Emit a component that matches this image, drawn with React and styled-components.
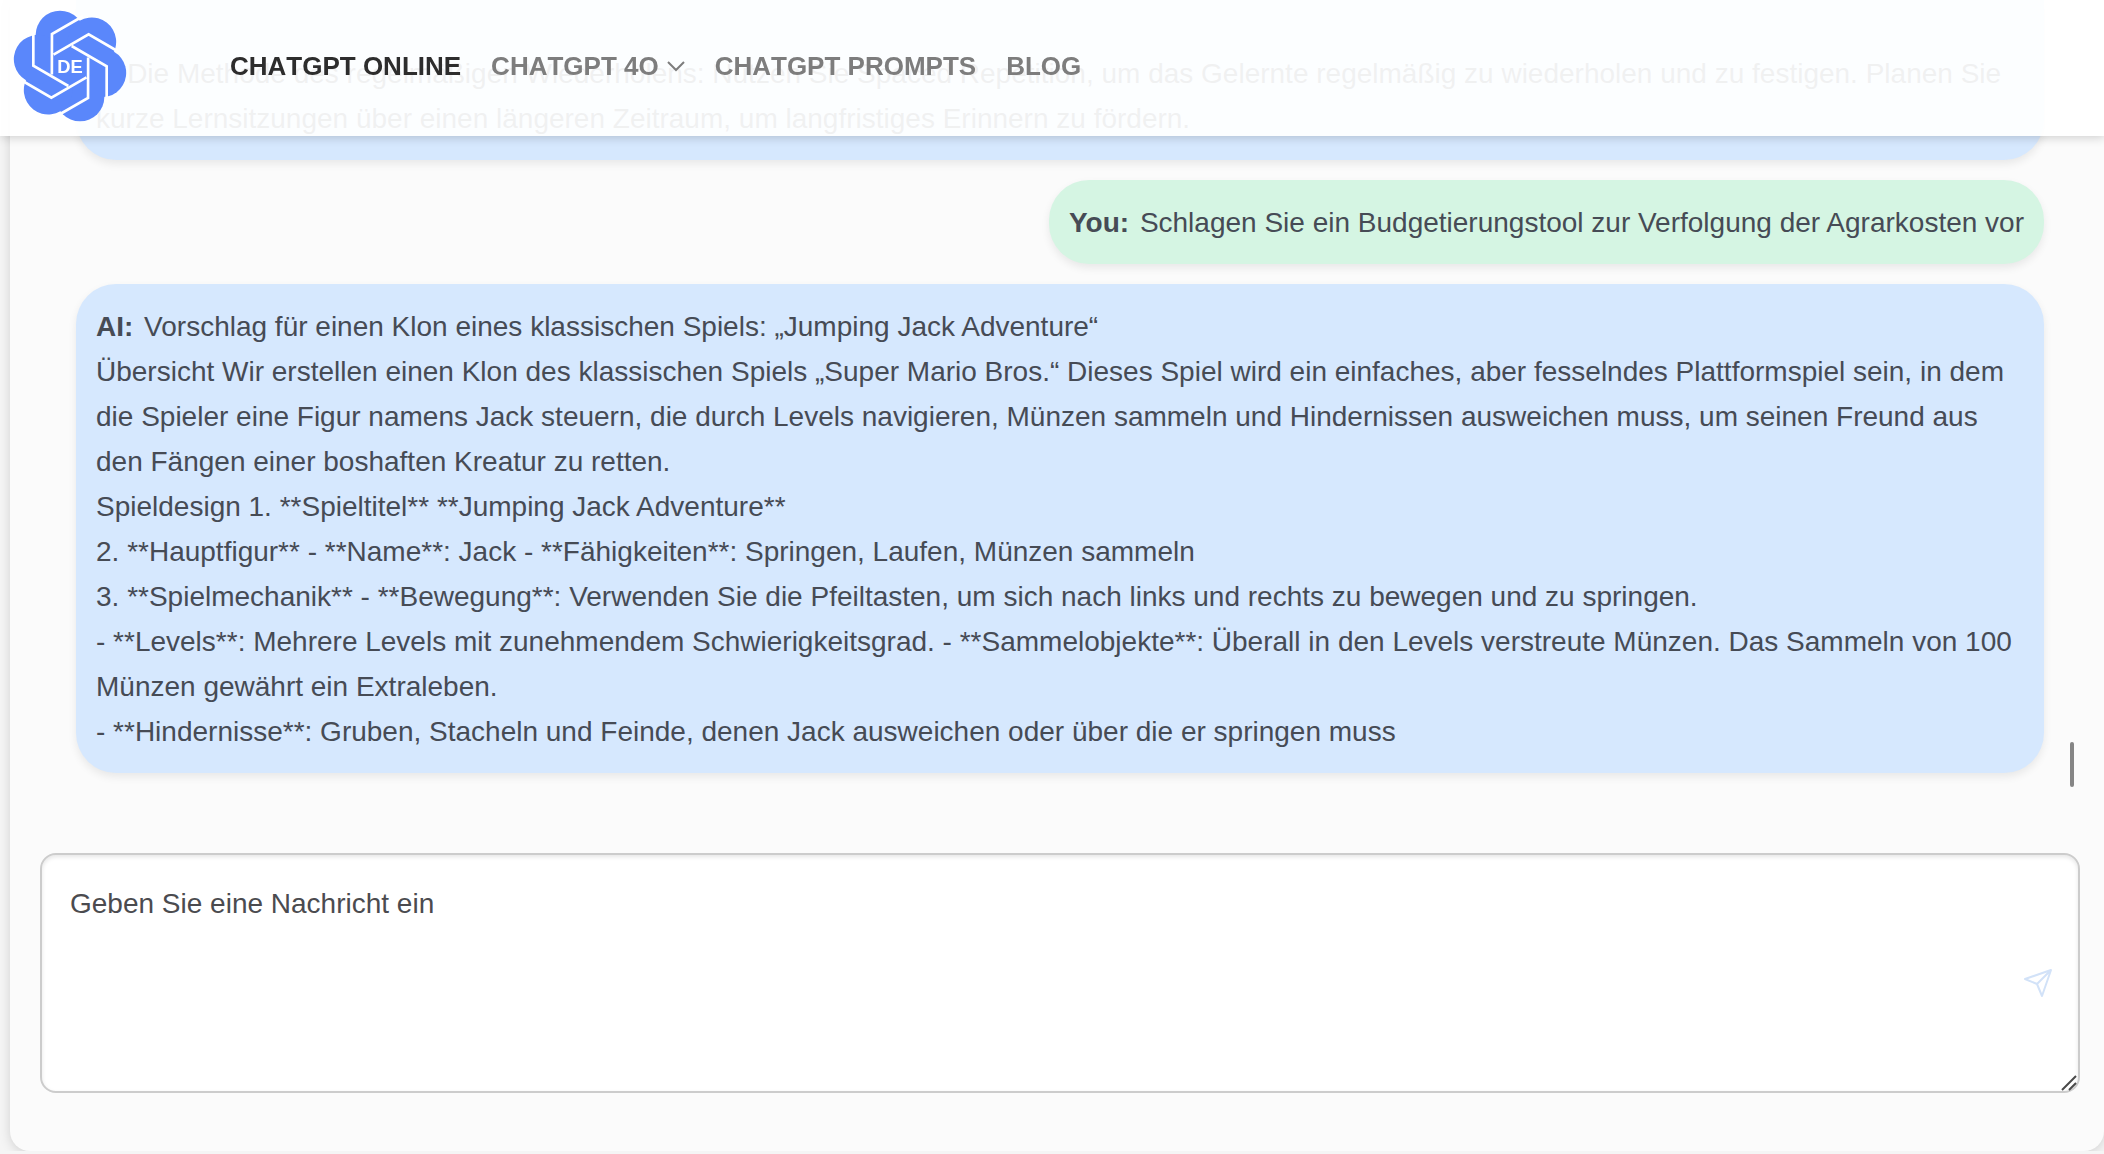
import { useState } from "react";
import styled, { createGlobalStyle } from "styled-components";

const messages = [
  {
    id: 1,
    author: null,
    continued: true,
    lines: [
      "5. Die Methode des regelmäßigen Wiederholens: Nutzen Sie Spaced Repetition, um das Gelernte regelmäßig zu wiederholen und zu festigen. Planen Sie kurze Lernsitzungen über einen längeren Zeitraum, um langfristiges Erinnern zu fördern.",
    ],
  },
  {
    id: 2,
    author: "You:",
    mine: true,
    lines: ["Schlagen Sie ein Budgetierungstool zur Verfolgung der Agrarkosten vor"],
  },
  {
    id: 3,
    author: "AI:",
    lines: [
      "Vorschlag für einen Klon eines klassischen Spiels: „Jumping Jack Adventure“",
      "Übersicht Wir erstellen einen Klon des klassischen Spiels „Super Mario Bros.“ Dieses Spiel wird ein einfaches, aber fesselndes Plattformspiel sein, in dem die Spieler eine Figur namens Jack steuern, die durch Levels navigieren, Münzen sammeln und Hindernissen ausweichen muss, um seinen Freund aus den Fängen einer boshaften Kreatur zu retten.",
      "Spieldesign 1. **Spieltitel** **Jumping Jack Adventure**",
      "2. **Hauptfigur** - **Name**: Jack - **Fähigkeiten**: Springen, Laufen, Münzen sammeln",
      "3. **Spielmechanik** - **Bewegung**: Verwenden Sie die Pfeiltasten, um sich nach links und rechts zu bewegen und zu springen.",
      "- **Levels**: Mehrere Levels mit zunehmendem Schwierigkeitsgrad. - **Sammelobjekte**: Überall in den Levels verstreute Münzen. Das Sammeln von 100 Münzen gewährt ein Extraleben.",
      "- **Hindernisse**: Gruben, Stacheln und Feinde, denen Jack ausweichen oder über die er springen muss",
    ],
  },
];

const angles = [0, 60, 120, 180, 240, 300];

function Logo() {
  return (
    <svg width="114" height="114" viewBox="-171 -171 342 342" aria-hidden="true">
      <g fill="#5a87fb">
        <circle r="118" />
        {angles.map((angle) => (
          <circle
            key={angle}
            cx="-30"
            cy="-93"
            r="73"
            transform={`rotate(${angle})`}
          />
        ))}
      </g>
      <g fill="none" stroke="#fff" strokeWidth="8">
        {angles.map((angle) => (
          <path
            key={angle}
            d="M-110 -108V-1L-5 60"
            transform={`rotate(${angle})`}
          />
        ))}
      </g>
      <text
        x="0"
        y="22"
        textAnchor="middle"
        fill="#fff"
        fontFamily="Liberation Sans, Arial, sans-serif"
        fontSize="55"
        fontWeight="bold"
      >
        DE
      </text>
    </svg>
  );
}

function App() {
  const [message, setMessage] = useState("");

  const handleSubmit = (e) => {
    e.preventDefault();
    setMessage("");
  };

  return (
    <>
      <GlobalStyle />
      <Header>
        <LogoLink href="#" aria-label="ChatGPT DE">
          <Logo />
        </LogoLink>
        <Nav>
          <NavItem href="#" $active>
            CHATGPT ONLINE
          </NavItem>
          <NavItem href="#">
            CHATGPT 4O
            <svg width="18" height="12" viewBox="0 0 18 12" aria-hidden="true">
              <path
                d="M1 2L9 10L17 2"
                fill="none"
                stroke="currentColor"
                strokeWidth="2"
              />
            </svg>
          </NavItem>
          <NavItem href="#">CHATGPT PROMPTS</NavItem>
          <NavItem href="#">BLOG</NavItem>
        </Nav>
      </Header>
      <Card>
        <ChatArea>
          <MessageList>
            {messages.map((item) => (
              <Bubble
                key={item.id}
                $mine={item.mine}
                $continued={item.continued}
              >
                {item.lines.map((line, index) => (
                  <p key={line}>
                    {index === 0 && item.author && (
                      <Author>{item.author} </Author>
                    )}
                    {line}
                  </p>
                ))}
              </Bubble>
            ))}
          </MessageList>
          <ScrollThumb />
        </ChatArea>
        <MessageForm onSubmit={handleSubmit}>
          <MessageInput
            aria-label="Nachricht"
            placeholder="Geben Sie eine Nachricht ein"
            value={message}
            onChange={(e) => setMessage(e.target.value)}
          />
          <SendButton type="submit" aria-label="Senden">
            <svg width="30" height="30" viewBox="0 0 30 30" aria-hidden="true">
              <path
                d="M2 11L28 2L19 28L14 16ZM14 16L28 2"
                fill="none"
                stroke="currentColor"
                strokeWidth="2"
                strokeLinejoin="round"
              />
            </svg>
          </SendButton>
          <ResizeGrip viewBox="0 0 16 16" aria-hidden="true">
            <path d="M1 15L15 1M8 15L15 8" stroke="#4a4a4a" strokeWidth="2" />
          </ResizeGrip>
        </MessageForm>
      </Card>
    </>
  );
}

const GlobalStyle = createGlobalStyle`
  * {
    box-sizing: border-box;
  }

  body {
    margin: 0;
    background-color: #f5f5f5;
    color: #464b55;
    font-family: "Liberation Sans", Arial, Helvetica, sans-serif;
    font-size: 28px;
    line-height: 45px;
    overflow: hidden;
  }

  p {
    margin: 0;
  }
`;

const Header = styled.header`
  position: fixed;
  top: 0;
  left: 0;
  right: 0;
  z-index: 2;
  display: flex;
  align-items: center;
  gap: 103px;
  height: 136px;
  padding: 0 13px 4px;
  background-color: rgba(255, 255, 255, 0.92);
  box-shadow: 1px 1px 10px rgba(0, 0, 0, 0.2);
`;

const LogoLink = styled.a`
  display: flex;
`;

const Nav = styled.nav`
  display: flex;
  align-items: center;
  gap: 30px;
`;

const NavItem = styled.a`
  display: flex;
  align-items: center;
  gap: 8px;
  color: ${(props) => (props.$active ? "#2d2d2d" : "#7d7d7d")};
  font-size: 26px;
  font-weight: bold;
  font-kerning: none;
  text-decoration: none;
`;

const Card = styled.main`
  margin-left: 10px;
  padding: 0 24px 58px 30px;
  border-radius: 0 0 20px 20px;
  background-color: #fbfbfb;
  box-shadow: 0 2px 12px rgba(0, 0, 0, 0.15);
`;

const ChatArea = styled.section`
  display: flex;
  align-items: flex-end;
  gap: 26px;
  padding: 0 6px 80px 36px;
`;

const MessageList = styled.div`
  display: flex;
  flex: 1;
  flex-direction: column;
  align-items: flex-start;
  gap: 20px;
`;

const Bubble = styled.article`
  align-self: ${(props) => (props.$mine ? "flex-end" : "stretch")};
  padding: ${(props) => (props.$continued ? "51px" : "20px")} 20px 19px;
  border-radius: ${(props) => (props.$continued ? "0 0 40px 40px" : "40px")};
  background-color: ${(props) => (props.$mine ? "#d5f5e3" : "#d6e8fe")};
  box-shadow: 0 4px 8px rgba(0, 0, 0, 0.08);
`;

const Author = styled.strong`
  margin-right: 3px;
`;

const ScrollThumb = styled.div`
  width: 4px;
  height: 45px;
  margin-bottom: -14px;
  border-radius: 2px;
  background-color: #858585;
`;

const MessageForm = styled.form`
  display: flex;
  position: relative;
`;

const MessageInput = styled.textarea`
  flex: 1;
  height: 240px;
  padding: 26px 80px 26px 28px;
  border: 2px solid #ccc;
  border-radius: 16px;
  background-color: #fff;
  box-shadow: inset 0 2px 4px rgba(0, 0, 0, 0.1);
  color: inherit;
  font: inherit;
  resize: none;

  &::placeholder {
    color: #4b4b4f;
    opacity: 1;
  }
`;

const SendButton = styled.button`
  position: absolute;
  right: 27px;
  bottom: 95px;
  display: flex;
  padding: 0;
  border: none;
  background: none;
  color: #d2e2f8;
  cursor: pointer;
`;

const ResizeGrip = styled.svg`
  position: absolute;
  right: 3px;
  bottom: 2px;
  width: 16px;
  height: 16px;
`;

export default App;
